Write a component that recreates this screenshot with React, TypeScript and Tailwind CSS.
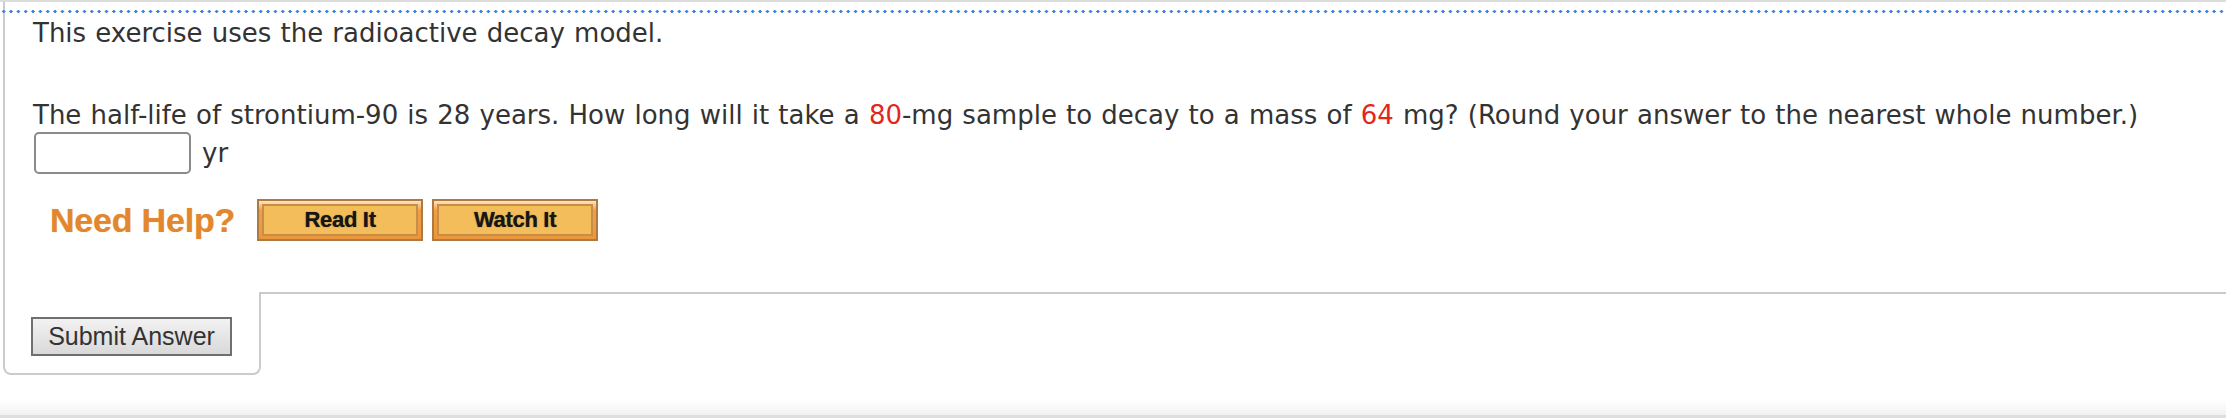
import React from "react";

export default function App() {
  const verdana = { fontFamily: '"DejaVu Sans", Verdana, sans-serif' };
  return (
    <div className="w-full h-[418px] bg-white overflow-hidden flex flex-col">
      <div className="h-[2px] bg-[#dcdcdc]" />
      <div className="ml-[3px] border-l-2 border-[#cbcbcb] h-[290px] flex flex-col">
        <div className="-ml-[5px] mt-[8px] h-[3px] bg-[radial-gradient(circle,#3a84e0_1.5px,transparent_1.7px)] bg-[length:7.35px_3px]" />
        <div className="pl-[28px] text-[26px] leading-[30px] text-[#333333] [word-spacing:0.9px]" style={verdana}>
          <div className="mt-[5px] whitespace-nowrap">This exercise uses the radioactive decay model.</div>
          <div className="mt-[52px] whitespace-nowrap">
            The half-life of strontium-90 is 28 years. How long will it take a{" "}
            <span className="text-[#e3261c]">80</span>-mg sample to decay to a mass of{" "}
            <span className="text-[#e3261c]">64</span> mg? (Round your answer to the nearest whole number.)
          </div>
          <div className="mt-[2px] flex items-center">
            <div className="ml-[1px] w-[157px] h-[42px] rounded-[5px] border-2 border-[#8a8a8a] bg-white" />
            <span className="ml-[11px]">yr</span>
          </div>
          <div className="mt-[25px] ml-[17px] flex items-center font-['Liberation_Sans',Arial,sans-serif] [word-spacing:0px]">
            <span className="text-[34px] leading-[42px] font-bold text-[#e2872f] tracking-[-0.2px] [text-shadow:0_0_1px_#f2b577] mr-[22px]">
              Need Help?
            </span>
            <HelpButton label="Read It" />
            <div className="w-[9px]" />
            <HelpButton label="Watch It" />
          </div>
        </div>
      </div>
      <div className="flex h-[83px]">
        <div className="ml-[3px] w-[258px] h-[83px] border-l-2 border-r-2 border-b-2 border-[#cbcbcb] rounded-b-[8px] pl-[26px] pt-[25px]">
          <button className="w-[201px] h-[39px] border-2 border-[#6f6f6f] bg-gradient-to-b from-[#f2f2f2] to-[#d9d9d9] text-[25px] leading-[35px] text-[#333333] font-['Liberation_Sans',Arial,sans-serif] flex items-center justify-center">
            Submit Answer
          </button>
        </div>
        <div className="flex-1 border-t-2 border-[#cbcbcb]" />
      </div>
      <div className="h-[25px]" />
      <div className="h-[15px] bg-gradient-to-b from-white to-[#f2f2f2]" />
      <div className="h-[3px] bg-[#dedede]" />
    </div>
  );
}

function HelpButton({ label }: { label: string }) {
  return (
    <div className="w-[166px] h-[42px] border-2 border-[#ad7b41] bg-gradient-to-b from-[#fbe6c6] via-[#ee9f44] via-[25%] to-[#ea973d] p-[3px]">
      <div className="w-full h-full border-2 border-[#c88e45] bg-[#f2bd5a] flex items-center justify-center">
        <span className="text-[22px] leading-[24px] font-bold text-[#161616] tracking-[-0.3px] [text-shadow:0_0_1px_#5a4020]">
          {label}
        </span>
      </div>
    </div>
  );
}
